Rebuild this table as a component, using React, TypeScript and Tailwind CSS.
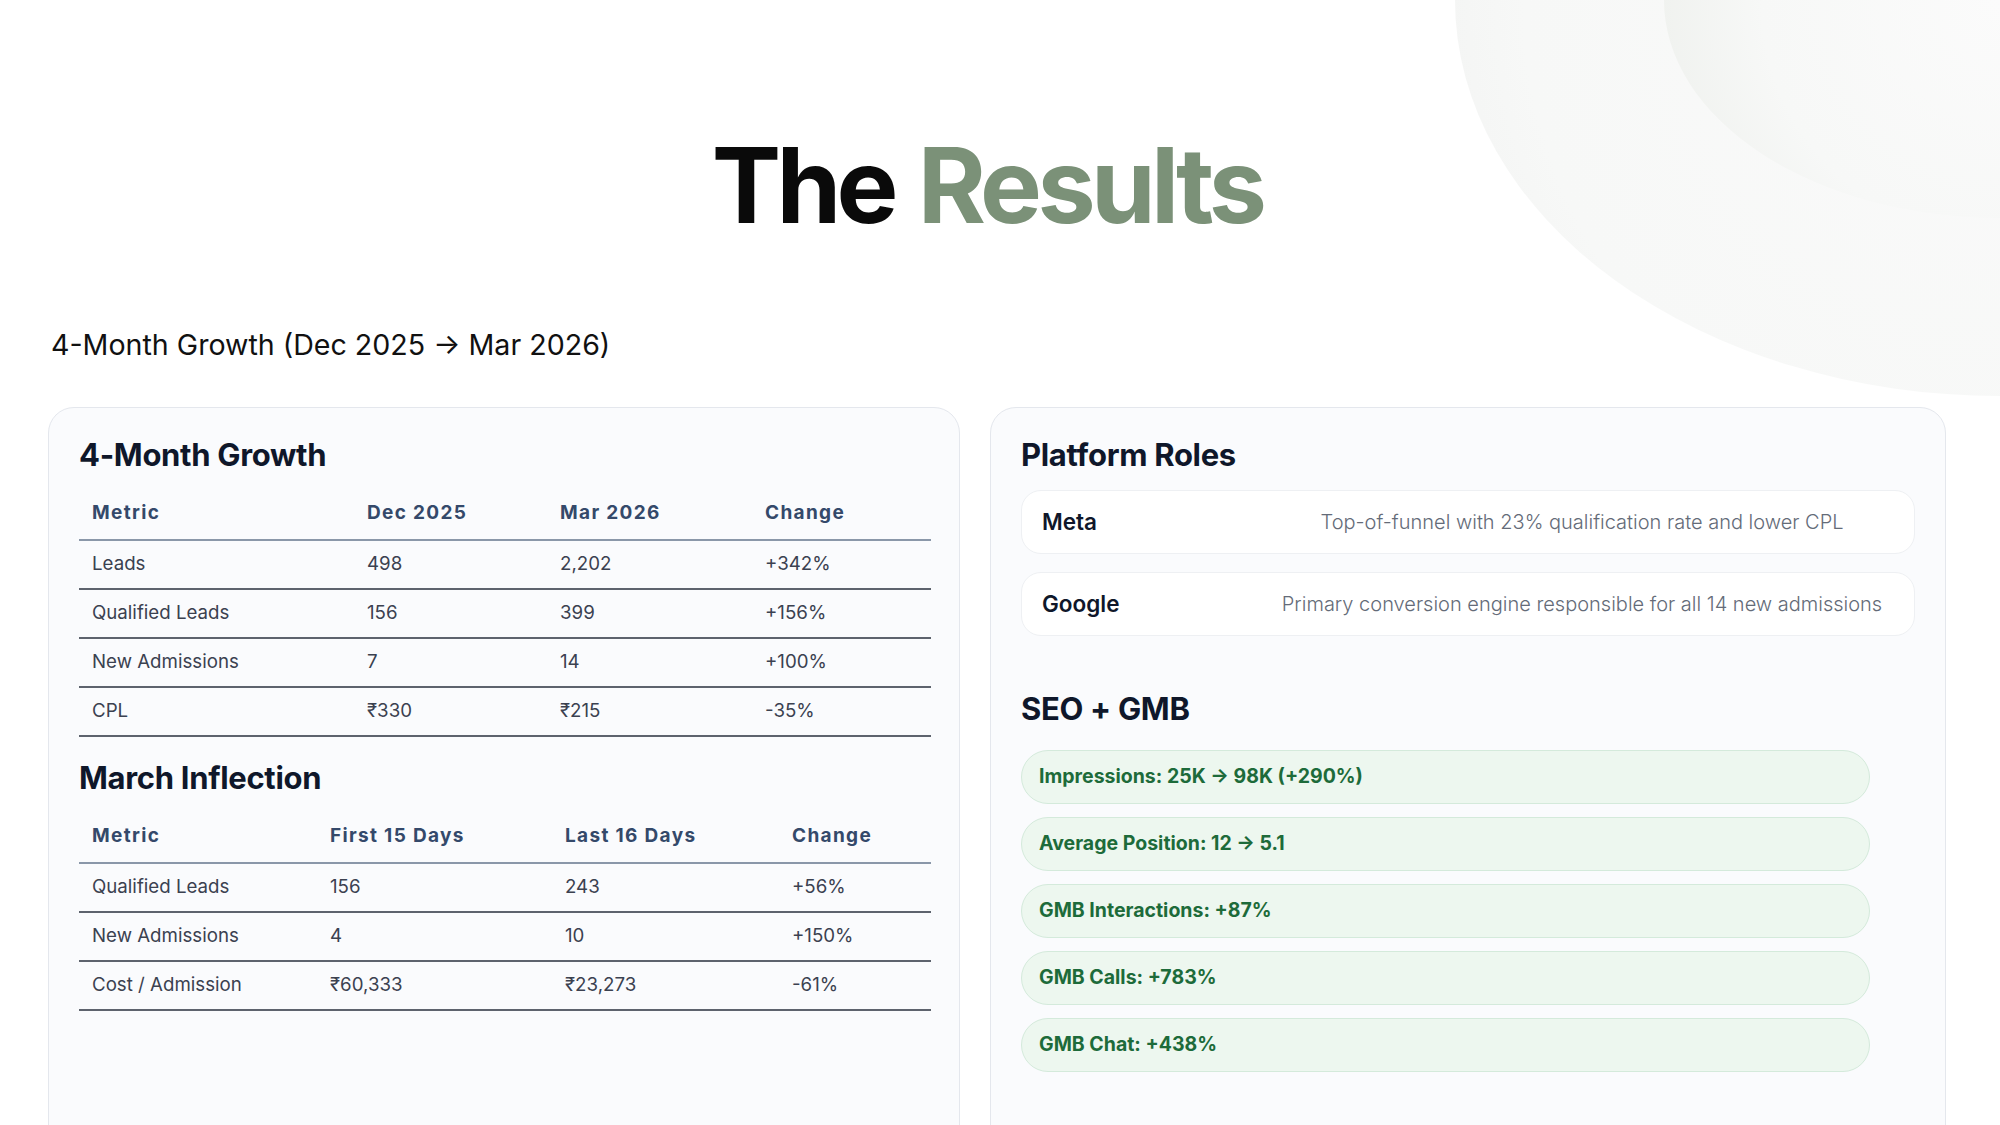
import React from "react";

type Table = {
  title: string;
  head: string[];
  widths: string[];
  rows: string[][];
};

const GROWTH: Table = {
  title: "4-Month Growth",
  head: ["Metric", "Dec 2025", "Mar 2026", "Change"],
  widths: ["w-[275px]", "w-[193px]", "w-[205px]", "w-[179px]"],
  rows: [
    ["Leads", "498", "2,202", "+342%"],
    ["Qualified Leads", "156", "399", "+156%"],
    ["New Admissions", "7", "14", "+100%"],
    ["CPL", "₹330", "₹215", "-35%"],
  ],
};

const MARCH: Table = {
  title: "March Inflection",
  head: ["Metric", "First 15 Days", "Last 16 Days", "Change"],
  widths: ["w-[238px]", "w-[235px]", "w-[227px]", "w-[152px]"],
  rows: [
    ["Qualified Leads", "156", "243", "+56%"],
    ["New Admissions", "4", "10", "+150%"],
    ["Cost / Admission", "₹60,333", "₹23,273", "-61%"],
  ],
};

const ROLES = [
  { name: "Meta", body: "Top-of-funnel with 23% qualification rate and lower CPL" },
  { name: "Google", body: "Primary conversion engine responsible for all 14 new admissions" },
];

const SEO = [
  "Impressions: 25K → 98K (+290%)",
  "Average Position: 12 → 5.1",
  "GMB Interactions: +87%",
  "GMB Calls: +783%",
  "GMB Chat: +438%",
];

function DataTable({ t, first }: { t: Table; first?: boolean }) {
  return (
    <div className={first ? "" : "mt-[23px]"}>
      <h3 className="text-[31px] leading-[36px] font-bold tracking-[-0.01em] text-[#0f172a]">{t.title}</h3>
      <table className="mt-[16px] w-full table-fixed border-collapse">
        <thead>
          <tr className="border-b-2 border-[#8a97a9]">
            {t.head.map((h, i) => (
              <th
                key={h}
                className={`${t.widths[i]} h-[51px] px-[13px] pb-[2px] text-left text-[19px] font-bold tracking-[0.07em] text-[#34496a]`}
              >
                {h}
              </th>
            ))}
          </tr>
        </thead>
        <tbody>
          {t.rows.map((r) => (
            <tr key={r[0]} className="border-b-2 border-[#5d636d]">
              {r.map((c, i) => (
                <td key={i} className="h-[49px] px-[13px] text-[18.7px] font-normal text-[#3b4150]">
                  {c}
                </td>
              ))}
            </tr>
          ))}
        </tbody>
      </table>
    </div>
  );
}

function Backdrop() {
  return (
    <svg className="pointer-events-none absolute inset-0 h-full w-full" viewBox="0 0 2000 1125" preserveAspectRatio="none">
      <defs>
        <radialGradient id="outer" cx="2000" cy="0" r="560" gradientUnits="userSpaceOnUse">
          <stop offset="0" stopColor="#fafafa" />
          <stop offset="0.85" stopColor="#f7f8f7" />
          <stop offset="1" stopColor="#f4f5f4" />
        </radialGradient>
        <radialGradient id="inner" cx="2000" cy="0" r="340" gradientUnits="userSpaceOnUse">
          <stop offset="0" stopColor="#fbfbfb" />
          <stop offset="0.7" stopColor="#f7f8f7" />
          <stop offset="1" stopColor="#f0f2ef" />
        </radialGradient>
      </defs>
      <ellipse cx="2000" cy="0" rx="545" ry="396" fill="url(#outer)" />
      <ellipse cx="2000" cy="0" rx="336" ry="218" fill="url(#inner)" />
    </svg>
  );
}

export default function App() {
  return (
    <div className="relative h-[1125px] w-[2000px] overflow-hidden bg-white font-['Inter','Noto_Sans',sans-serif]">
      <Backdrop />
      <div className="relative">
        <h1 className="pt-[133px] pr-[26px] text-center text-[104px] leading-[104px] font-bold tracking-[-0.045em] text-[#0a0a0a]">
          The <span className="ml-[4px] text-[#7b9178]">Results</span>
        </h1>
        <p className="mt-[90px] pl-[51px] text-[28.6px] leading-[36px] text-[#111111]">
          4-Month Growth (Dec 2025 → Mar 2026)
        </p>
        <div className="mt-[44px] grid grid-cols-[912px_956px] gap-[30px] pl-[48px]">
          <section className="h-[900px] rounded-[26px] border border-[#e4e7ed] bg-[#fafbfd] px-[30px] pt-[29px]">
            <DataTable t={GROWTH} first />
            <DataTable t={MARCH} />
          </section>
          <section className="h-[900px] rounded-[26px] border border-[#e4e7ed] bg-[#fafbfd] px-[30px] pt-[29px]">
            <h3 className="text-[31px] leading-[36px] font-bold tracking-[-0.01em] text-[#0f172a]">Platform Roles</h3>
            <div className="mt-[17px] flex flex-col gap-[18px]">
              {ROLES.map((r) => (
                <div
                  key={r.name}
                  className="flex h-[64px] items-center rounded-[20px] border border-[#eef0f3] bg-white px-[20px]"
                >
                  <span className="w-[228px] shrink-0 text-[22.5px] font-semibold text-[#0f172a]">{r.name}</span>
                  <span className="flex-1 text-center text-[20px] font-light text-[#646b78]">{r.body}</span>
                </div>
              ))}
            </div>
            <h3 className="mt-[55px] text-[31px] leading-[36px] font-bold tracking-[-0.01em] text-[#0f172a]">SEO + GMB</h3>
            <div className="mt-[23px] flex flex-col gap-[13px]">
              {SEO.map((s) => (
                <div
                  key={s}
                  className="flex h-[54px] w-[95%] items-center rounded-full border border-[#d4eadb] bg-[#edf7ef] px-[17px] text-[19.5px] font-bold text-[#1d6b3a]"
                >
                  {s}
                </div>
              ))}
            </div>
          </section>
        </div>
      </div>
    </div>
  );
}
